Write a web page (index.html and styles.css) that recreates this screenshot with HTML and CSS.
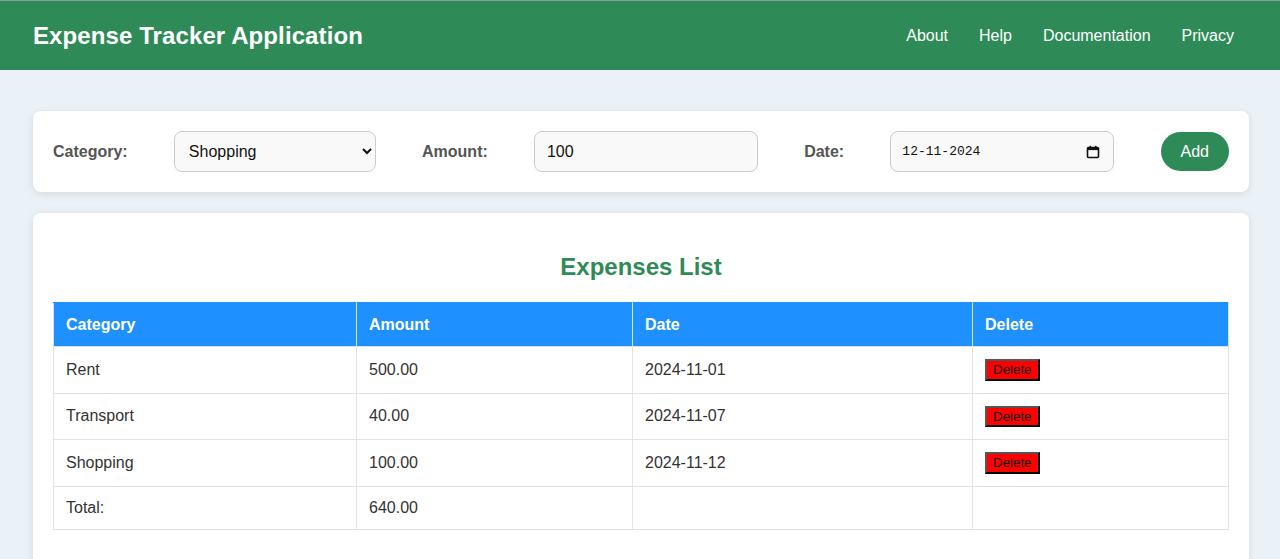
FILE: index.html
```html
<!DOCTYPE html>
<html lang="en">
<head>
<meta charset="utf-8">
<title>Expense Tracker Application</title>
<link rel="stylesheet" href="styles.css">
</head>
<body>
<header class="topbar">
  <h1 class="brand">Expense Tracker Application</h1>
  <nav class="nav">
    <a href="#">About</a>
    <a href="#">Help</a>
    <a href="#">Documentation</a>
    <a href="#">Privacy</a>
  </nav>
</header>
<main class="main">
  <form class="card form-card">
    <label class="form-label" for="cat">Category:</label>
    <select id="cat" class="field field-select">
      <option>Food</option>
      <option>Rent</option>
      <option>Transport</option>
      <option selected>Shopping</option>
    </select>
    <label class="form-label" for="amt">Amount:</label>
    <input id="amt" class="field field-amount" type="text" value="100">
    <label class="form-label" for="dt">Date:</label>
    <div class="field field-date">
      <input id="dt" class="date-text" type="text" value="12-11-2024">
      <svg class="cal-icon" width="14" height="14" viewBox="0 0 14 14" aria-hidden="true">
        <rect x="1.5" y="2.5" width="11" height="10" rx="1" fill="none" stroke="#111" stroke-width="1.6"/>
        <rect x="1.5" y="2.5" width="11" height="2.6" fill="#111"/>
        <rect x="3.5" y="0.8" width="1.6" height="2.5" fill="#111"/>
        <rect x="8.9" y="0.8" width="1.6" height="2.5" fill="#111"/>
      </svg>
    </div>
    <button type="button" class="add-btn">Add</button>
  </form>

  <section class="card list-card">
    <h2 class="list-title">Expenses List</h2>
    <table class="expenses">
      <thead>
        <tr>
          <th class="c1">Category</th>
          <th class="c2">Amount</th>
          <th class="c3">Date</th>
          <th class="c4">Delete</th>
        </tr>
      </thead>
      <tbody>
        <tr><td>Rent</td><td>500.00</td><td>2024-11-01</td><td><button type="button" class="del-btn">Delete</button></td></tr>
        <tr><td>Transport</td><td>40.00</td><td>2024-11-07</td><td><button type="button" class="del-btn">Delete</button></td></tr>
        <tr><td>Shopping</td><td>100.00</td><td>2024-11-12</td><td><button type="button" class="del-btn">Delete</button></td></tr>
        <tr class="total-row"><td>Total:</td><td>640.00</td><td></td><td></td></tr>
      </tbody>
    </table>
  </section>
</main>
</body>
</html>
```

FILE: styles.css
```css
* { box-sizing: border-box; }

html, body {
  margin: 0;
  padding: 0;
}

body {
  font-family: "Liberation Sans", Arial, sans-serif;
  background: #eaf2f8;
  color: #333;
}

.topbar {
  display: flex;
  align-items: center;
  justify-content: space-between;
  height: 70px;
  padding: 0 46px 0 33px;
  background: #2e8b57;
  border-top: 1px solid #8c9c98;
}

.brand {
  margin: 0;
  font-size: 24px;
  font-weight: bold;
  color: #fff;
  letter-spacing: 0.1px;
}

.nav {
  display: flex;
  gap: 31px;
}

.nav a {
  color: #fff;
  text-decoration: none;
  font-size: 16px;
}

.main {
  padding: 41px 31px 0 33px;
}

.card {
  background: #fff;
  border-radius: 8px;
  box-shadow: 0 2px 8px rgba(0, 0, 0, 0.1);
}

.form-card {
  display: flex;
  align-items: center;
  justify-content: space-between;
  padding: 20px;
  margin: 0 0 21px 0;
}

.form-label {
  font-size: 16px;
  font-weight: bold;
  color: #555;
  padding-top: 1px;
}

.field {
  height: 41px;
  border: 1px solid #ccc;
  border-radius: 8px;
  background: #f9f9f9;
  font-family: "Liberation Sans", Arial, sans-serif;
  font-size: 16px;
  color: #111;
}

.field-select {
  width: 202px;
  padding: 0 8px 0 10px;
}

.field-amount {
  width: 224px;
  padding: 0 12px;
}

.field-date {
  width: 224px;
  display: flex;
  align-items: center;
  padding: 0 13px 0 11px;
}

.date-text {
  flex: 1;
  min-width: 0;
  border: 0;
  background: transparent;
  font-family: "Liberation Mono", "DejaVu Sans Mono", monospace;
  font-size: 13px;
  color: #111;
  padding: 0;
  outline: none;
}

.cal-icon {
  flex: none;
}

.add-btn {
  height: 39px;
  padding: 0 20px;
  border: 0;
  border-radius: 20px;
  background: #2e8b57;
  color: #fff;
  font-family: "Liberation Sans", Arial, sans-serif;
  font-size: 16px;
}

.list-card {
  padding: 20px 20px 40px;
}

.list-title {
  margin: 20px 0 21px;
  text-align: center;
  font-size: 24px;
  color: #2e8b57;
}

.expenses {
  width: 100%;
  border-collapse: collapse;
  font-size: 16px;
}

.expenses th,
.expenses td {
  border: 1px solid #e3e3e3;
  padding: 12px;
  text-align: left;
}

.expenses th {
  height: 44px;
  background: #1e90ff;
  color: #fff;
  font-weight: bold;
  border-color: #cfe3f7;
  border-top-color: #1e90ff;
}

.expenses td {
  color: #333;
}

.c1 { width: 303px; }
.c2 { width: 276px; }
.c3 { width: 340px; }

.del-btn {
  background: red;
  color: #111;
  font-family: "Liberation Sans", Arial, sans-serif;
  font-size: 13.33px;
  padding: 1px 6px;
  border: 2px outset #555;
  line-height: 15.5px;
  vertical-align: middle;
}
```
